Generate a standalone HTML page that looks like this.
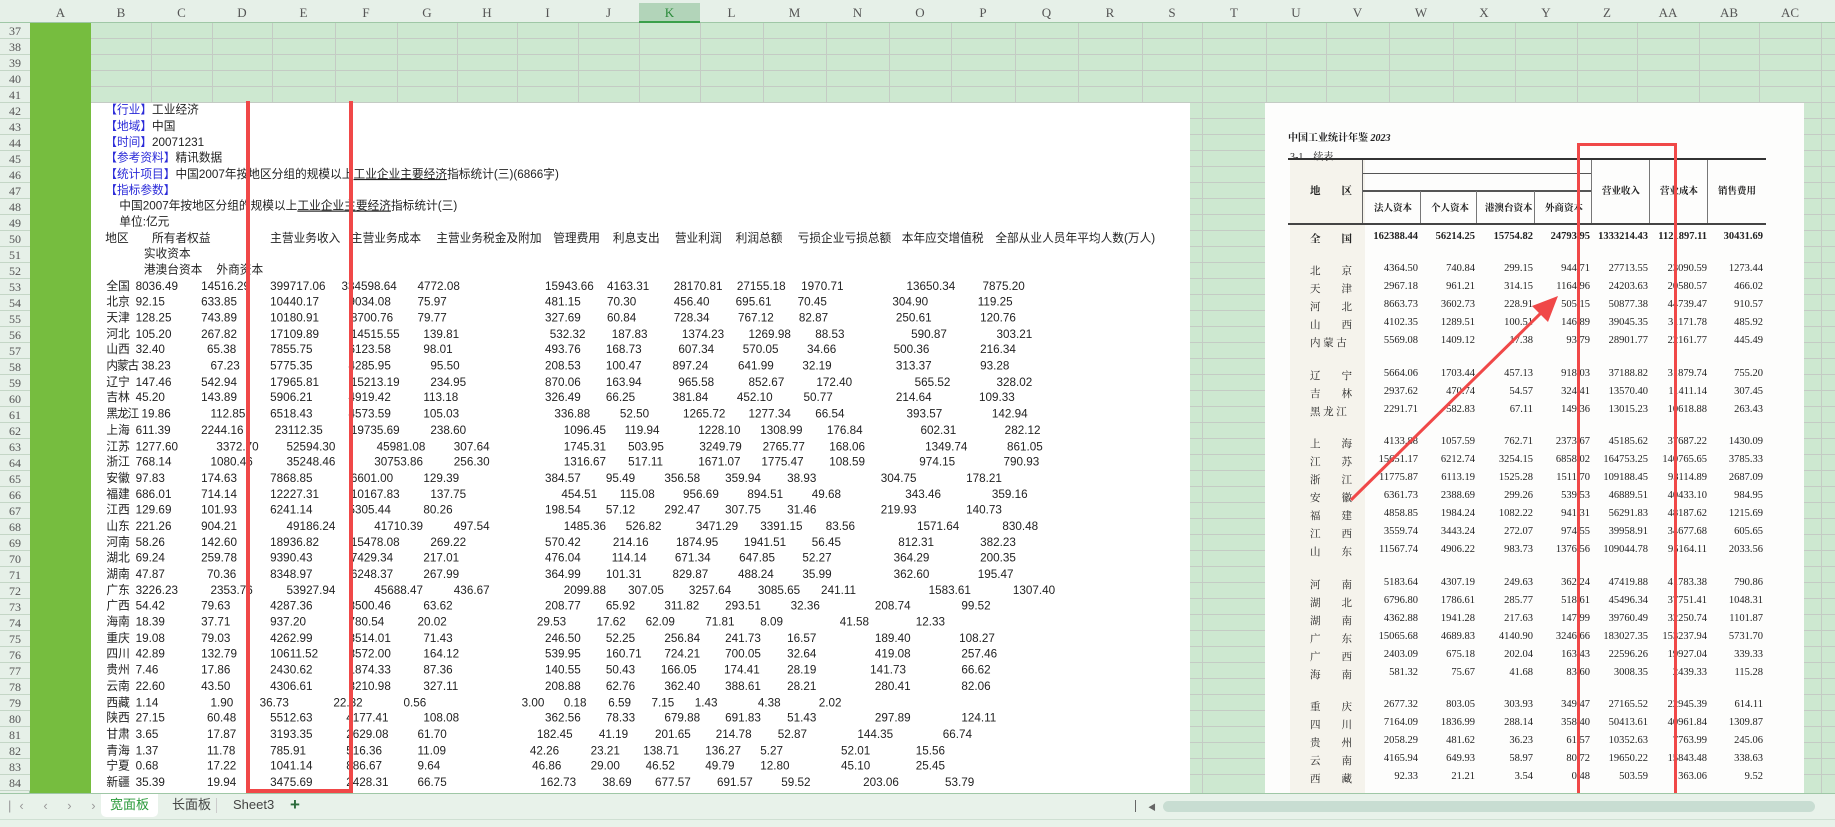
<!DOCTYPE html>
<html><head><meta charset="utf-8"><style>
*{margin:0;padding:0;box-sizing:border-box}
body{width:1835px;height:827px;overflow:hidden;background:#cde8d0;font-family:"Liberation Sans","Noto Sans CJK SC",sans-serif;position:relative}
.abs{position:absolute}
.ch{position:absolute;top:3px;height:20px;font:13px "Liberation Serif","Noto Serif CJK SC",serif;color:#555;text-align:center;line-height:20px}
.vl{position:absolute;top:23px;width:1px;height:770px;background:#c4cbc4}
.hl{position:absolute;left:30px;right:0;height:1px;background:#c4cbc4}
.rn{position:absolute;left:0;width:30px;height:16px;font:12px "Liberation Serif",serif;color:#555;text-align:center;line-height:16px;border-bottom:1px solid #c4d6c6;background:#e6f0e8}
#L{position:absolute;left:0;top:0;width:1100px;height:700px;transform:scale(1.1696);transform-origin:0 0;font-size:10px;color:#222}
#L .r{position:absolute;left:0;height:13.68px;line-height:13.68px;white-space:nowrap}
#L .r span{position:absolute;white-space:nowrap}
.bl{color:#2a2ad8}
#R{position:absolute;left:1265px;top:103px;width:539px;height:690px;background:#fdfdfc;font-family:"Liberation Serif","Noto Serif CJK SC",serif;color:#222}
#R .t{position:absolute;font-size:10.5px;white-space:nowrap}
#R .v{position:absolute;font-size:10.5px;text-align:right;width:60px;white-space:nowrap}
</style></head><body>
<div class="abs" style="left:0;top:0;width:1835px;height:23px;background:#e6f0e8;border-bottom:1px solid #9fc7a6"></div>
<div class="abs" style="left:639px;top:3px;width:61px;height:20px;background:#b2d4b9;border-bottom:2px solid #3aa04a"></div>
<div class="ch" style="left:30px;width:61px">A</div><div class="ch" style="left:91px;width:60px">B</div><div class="ch" style="left:151px;width:61px">C</div><div class="ch" style="left:212px;width:60px">D</div><div class="ch" style="left:272px;width:63px">E</div><div class="ch" style="left:335px;width:62px">F</div><div class="ch" style="left:397px;width:60px">G</div><div class="ch" style="left:457px;width:60px">H</div><div class="ch" style="left:517px;width:61px">I</div><div class="ch" style="left:578px;width:61px">J</div><div class="ch" style="left:639px;width:61px;color:#2a8a3a">K</div><div class="ch" style="left:700px;width:63px">L</div><div class="ch" style="left:763px;width:63px">M</div><div class="ch" style="left:826px;width:63px">N</div><div class="ch" style="left:889px;width:62px">O</div><div class="ch" style="left:951px;width:64px">P</div><div class="ch" style="left:1015px;width:63px">Q</div><div class="ch" style="left:1078px;width:64px">R</div><div class="ch" style="left:1142px;width:60px">S</div><div class="ch" style="left:1202px;width:64px">T</div><div class="ch" style="left:1266px;width:60px">U</div><div class="ch" style="left:1326px;width:63px">V</div><div class="ch" style="left:1389px;width:64px">W</div><div class="ch" style="left:1453px;width:62px">X</div><div class="ch" style="left:1515px;width:62px">Y</div><div class="ch" style="left:1577px;width:60px">Z</div><div class="ch" style="left:1637px;width:62px">AA</div><div class="ch" style="left:1699px;width:60px">AB</div><div class="ch" style="left:1759px;width:62px">AC</div>
<div class="vl" style="left:151px"></div><div class="vl" style="left:212px"></div><div class="vl" style="left:272px"></div><div class="vl" style="left:335px"></div><div class="vl" style="left:397px"></div><div class="vl" style="left:457px"></div><div class="vl" style="left:517px"></div><div class="vl" style="left:578px"></div><div class="vl" style="left:639px"></div><div class="vl" style="left:700px"></div><div class="vl" style="left:763px"></div><div class="vl" style="left:826px"></div><div class="vl" style="left:889px"></div><div class="vl" style="left:951px"></div><div class="vl" style="left:1015px"></div><div class="vl" style="left:1078px"></div><div class="vl" style="left:1142px"></div><div class="vl" style="left:1202px"></div><div class="vl" style="left:1266px"></div><div class="vl" style="left:1326px"></div><div class="vl" style="left:1389px"></div><div class="vl" style="left:1453px"></div><div class="vl" style="left:1515px"></div><div class="vl" style="left:1577px"></div><div class="vl" style="left:1637px"></div><div class="vl" style="left:1699px"></div><div class="vl" style="left:1759px"></div><div class="vl" style="left:1821px"></div>
<div class="hl" style="top:38px"></div><div class="hl" style="top:54px"></div><div class="hl" style="top:70px"></div><div class="hl" style="top:86px"></div><div class="hl" style="top:102px"></div>
<div class="hl" style="top:118px;left:1190px"></div><div class="hl" style="top:134px;left:1190px"></div><div class="hl" style="top:150px;left:1190px"></div><div class="hl" style="top:166px;left:1190px"></div><div class="hl" style="top:182px;left:1190px"></div><div class="hl" style="top:198px;left:1190px"></div><div class="hl" style="top:214px;left:1190px"></div><div class="hl" style="top:230px;left:1190px"></div><div class="hl" style="top:246px;left:1190px"></div><div class="hl" style="top:262px;left:1190px"></div><div class="hl" style="top:278px;left:1190px"></div><div class="hl" style="top:294px;left:1190px"></div><div class="hl" style="top:310px;left:1190px"></div><div class="hl" style="top:326px;left:1190px"></div><div class="hl" style="top:342px;left:1190px"></div><div class="hl" style="top:358px;left:1190px"></div><div class="hl" style="top:374px;left:1190px"></div><div class="hl" style="top:390px;left:1190px"></div><div class="hl" style="top:406px;left:1190px"></div><div class="hl" style="top:422px;left:1190px"></div><div class="hl" style="top:438px;left:1190px"></div><div class="hl" style="top:454px;left:1190px"></div><div class="hl" style="top:470px;left:1190px"></div><div class="hl" style="top:486px;left:1190px"></div><div class="hl" style="top:502px;left:1190px"></div><div class="hl" style="top:518px;left:1190px"></div><div class="hl" style="top:534px;left:1190px"></div><div class="hl" style="top:550px;left:1190px"></div><div class="hl" style="top:566px;left:1190px"></div><div class="hl" style="top:582px;left:1190px"></div><div class="hl" style="top:598px;left:1190px"></div><div class="hl" style="top:614px;left:1190px"></div><div class="hl" style="top:630px;left:1190px"></div><div class="hl" style="top:646px;left:1190px"></div><div class="hl" style="top:662px;left:1190px"></div><div class="hl" style="top:678px;left:1190px"></div><div class="hl" style="top:694px;left:1190px"></div><div class="hl" style="top:710px;left:1190px"></div><div class="hl" style="top:726px;left:1190px"></div><div class="hl" style="top:742px;left:1190px"></div><div class="hl" style="top:758px;left:1190px"></div><div class="hl" style="top:774px;left:1190px"></div>
<div class="abs" style="left:0;top:23px;width:30px;height:770px;background:#e6f0e8;border-right:1px solid #9fc7a6"></div>
<div class="rn" style="top:23px">37</div><div class="rn" style="top:39px">38</div><div class="rn" style="top:55px">39</div><div class="rn" style="top:71px">40</div><div class="rn" style="top:87px">41</div><div class="rn" style="top:103px">42</div><div class="rn" style="top:119px">43</div><div class="rn" style="top:135px">44</div><div class="rn" style="top:151px">45</div><div class="rn" style="top:167px">46</div><div class="rn" style="top:183px">47</div><div class="rn" style="top:199px">48</div><div class="rn" style="top:215px">49</div><div class="rn" style="top:231px">50</div><div class="rn" style="top:247px">51</div><div class="rn" style="top:263px">52</div><div class="rn" style="top:279px">53</div><div class="rn" style="top:295px">54</div><div class="rn" style="top:311px">55</div><div class="rn" style="top:327px">56</div><div class="rn" style="top:343px">57</div><div class="rn" style="top:359px">58</div><div class="rn" style="top:375px">59</div><div class="rn" style="top:391px">60</div><div class="rn" style="top:407px">61</div><div class="rn" style="top:423px">62</div><div class="rn" style="top:439px">63</div><div class="rn" style="top:455px">64</div><div class="rn" style="top:471px">65</div><div class="rn" style="top:487px">66</div><div class="rn" style="top:503px">67</div><div class="rn" style="top:519px">68</div><div class="rn" style="top:535px">69</div><div class="rn" style="top:551px">70</div><div class="rn" style="top:567px">71</div><div class="rn" style="top:583px">72</div><div class="rn" style="top:599px">73</div><div class="rn" style="top:615px">74</div><div class="rn" style="top:631px">75</div><div class="rn" style="top:647px">76</div><div class="rn" style="top:663px">77</div><div class="rn" style="top:679px">78</div><div class="rn" style="top:695px">79</div><div class="rn" style="top:711px">80</div><div class="rn" style="top:727px">81</div><div class="rn" style="top:743px">82</div><div class="rn" style="top:759px">83</div><div class="rn" style="top:775px">84</div>
<div class="abs" style="left:30px;top:23px;width:61px;height:770px;background:#76bd3f"></div>
<div class="abs" style="left:91px;top:103px;width:1099px;height:690px;background:#fff"></div>

<div id="L">
<div class="r" style="top:88px"><span style="left:90px"><b class="bl" style="font-weight:normal">【行业】</b>工业经济</span></div>
<div class="r" style="top:101.8px"><span style="left:90px"><b class="bl" style="font-weight:normal">【地域】</b>中国</span></div>
<div class="r" style="top:115.5px"><span style="left:90px"><b class="bl" style="font-weight:normal">【时间】</b>20071231</span></div>
<div class="r" style="top:129.2px"><span style="left:90px"><b class="bl" style="font-weight:normal">【参考资料】</b>精讯数据</span></div>
<div class="r" style="top:142.8px"><span style="left:90px"><b class="bl" style="font-weight:normal">【统计项目】</b>中国2007年按地区分组的规模以上<u>工业企业主要经济</u>指标统计(三)(6866字)</span></div>
<div class="r" style="top:156.5px"><span style="left:90px" class="bl">【指标参数】</span></div>
<div class="r" style="top:170.2px"><span style="left:102px">中国2007年按地区分组的规模以上<u>工业企业主要经济</u>指标统计(三)</span></div>
<div class="r" style="top:183.9px"><span style="left:102px">单位:亿元</span></div>
<div class="r" style="top:197.6px"><span style="left:90px">地区</span><span style="left:130px">所有者权益</span><span style="left:231px">主营业务收入</span><span style="left:300px">主营业务成本</span><span style="left:373px">主营业务税金及附加</span><span style="left:473px">管理费用</span><span style="left:524px">利息支出</span><span style="left:577px">营业利润</span><span style="left:629px">利润总额</span><span style="left:682px">亏损企业亏损总额</span><span style="left:771px">本年应交增值税</span><span style="left:851px">全部从业人员年平均人数(万人)</span></div>
<div class="r" style="top:211.3px"><span style="left:123px">实收资本</span></div>
<div class="r" style="top:225px"><span style="left:123px">港澳台资本</span><span style="left:185px">外商资本</span></div>
<div class="r" style="top:238.6px"><span style="left:91px">全国</span><span style="left:116px">8036.49</span><span style="left:172px">14516.29</span><span style="left:231px">399717.06</span><span style="left:292px">334598.64</span><span style="left:357px">4772.08</span><span style="left:466px">15943.66</span><span style="left:519px">4163.31</span><span style="left:576px">28170.81</span><span style="left:630px">27155.18</span><span style="left:685px">1970.71</span><span style="left:775px">13650.34</span><span style="left:840px">7875.20</span></div>
<div class="r" style="top:252.3px"><span style="left:91px">北京</span><span style="left:116px">92.15</span><span style="left:172px">633.85</span><span style="left:231px">10440.17</span><span style="left:298px">9034.08</span><span style="left:357px">75.97</span><span style="left:466px">481.15</span><span style="left:519px">70.30</span><span style="left:576px">456.40</span><span style="left:629px">695.61</span><span style="left:682px">70.45</span><span style="left:763px">304.90</span><span style="left:836px">119.25</span></div>
<div class="r" style="top:266px"><span style="left:91px">天津</span><span style="left:116px">128.25</span><span style="left:172px">743.89</span><span style="left:231px">10180.91</span><span style="left:300px">8700.76</span><span style="left:357px">79.77</span><span style="left:466px">327.69</span><span style="left:519px">60.84</span><span style="left:576px">728.34</span><span style="left:631px">767.12</span><span style="left:683px">82.87</span><span style="left:766px">250.61</span><span style="left:838px">120.76</span></div>
<div class="r" style="top:279.7px"><span style="left:91px">河北</span><span style="left:116px">105.20</span><span style="left:172px">267.82</span><span style="left:231px">17109.89</span><span style="left:300px">14515.55</span><span style="left:362px">139.81</span><span style="left:470px">532.32</span><span style="left:523px">187.83</span><span style="left:583px">1374.23</span><span style="left:640px">1269.98</span><span style="left:697px">88.53</span><span style="left:779px">590.87</span><span style="left:852px">303.21</span></div>
<div class="r" style="top:293.4px"><span style="left:91px">山西</span><span style="left:116px">32.40</span><span style="left:177px">65.38</span><span style="left:231px">7855.75</span><span style="left:298px">6123.58</span><span style="left:362px">98.01</span><span style="left:466px">493.76</span><span style="left:518px">168.73</span><span style="left:580px">607.34</span><span style="left:635px">570.05</span><span style="left:690px">34.66</span><span style="left:764px">500.36</span><span style="left:838px">216.34</span></div>
<div class="r" style="top:307.1px"><span style="left:91px;letter-spacing:-1px">内蒙古</span><span style="left:121px">38.23</span><span style="left:180px">67.23</span><span style="left:231px">5775.35</span><span style="left:298px">4285.95</span><span style="left:368px">95.50</span><span style="left:466px">208.53</span><span style="left:518px">100.47</span><span style="left:575px">897.24</span><span style="left:631px">641.99</span><span style="left:686px">32.19</span><span style="left:766px">313.37</span><span style="left:838px">93.28</span></div>
<div class="r" style="top:320.8px"><span style="left:91px">辽宁</span><span style="left:116px">147.46</span><span style="left:172px">542.94</span><span style="left:231px">17965.81</span><span style="left:300px">15213.19</span><span style="left:368px">234.95</span><span style="left:466px">870.06</span><span style="left:518px">163.94</span><span style="left:580px">965.58</span><span style="left:640px">852.67</span><span style="left:698px">172.40</span><span style="left:782px">565.52</span><span style="left:852px">328.02</span></div>
<div class="r" style="top:334.4px"><span style="left:91px">吉林</span><span style="left:116px">45.20</span><span style="left:172px">143.89</span><span style="left:231px">5906.21</span><span style="left:298px">4919.42</span><span style="left:362px">113.18</span><span style="left:466px">326.49</span><span style="left:518px">66.25</span><span style="left:575px">381.84</span><span style="left:630px">452.10</span><span style="left:687px">50.77</span><span style="left:766px">214.64</span><span style="left:837px">109.33</span></div>
<div class="r" style="top:348.1px"><span style="left:91px;letter-spacing:-1px">黑龙江</span><span style="left:121px">19.86</span><span style="left:180px">112.85</span><span style="left:231px">6518.43</span><span style="left:298px">4573.59</span><span style="left:362px">105.03</span><span style="left:474px">336.88</span><span style="left:530px">52.50</span><span style="left:584px">1265.72</span><span style="left:640px">1277.34</span><span style="left:697px">66.54</span><span style="left:775px">393.57</span><span style="left:848px">142.94</span></div>
<div class="r" style="top:361.8px"><span style="left:91px">上海</span><span style="left:116px">611.39</span><span style="left:172px">2244.16</span><span style="left:235px">23112.35</span><span style="left:300px">19735.69</span><span style="left:368px">238.60</span><span style="left:482px">1096.45</span><span style="left:534px">119.94</span><span style="left:597px">1228.10</span><span style="left:650px">1308.99</span><span style="left:707px">176.84</span><span style="left:787px">602.31</span><span style="left:859px">282.12</span></div>
<div class="r" style="top:375.5px"><span style="left:91px">江苏</span><span style="left:116px">1277.60</span><span style="left:185px">3372.70</span><span style="left:245px">52594.30</span><span style="left:322px">45981.08</span><span style="left:388px">307.64</span><span style="left:482px">1745.31</span><span style="left:537px">503.95</span><span style="left:598px">3249.79</span><span style="left:652px">2765.77</span><span style="left:709px">168.06</span><span style="left:791px">1349.74</span><span style="left:861px">861.05</span></div>
<div class="r" style="top:389.2px"><span style="left:91px">浙江</span><span style="left:116px">768.14</span><span style="left:180px">1080.46</span><span style="left:245px">35248.46</span><span style="left:320px">30753.86</span><span style="left:388px">256.30</span><span style="left:482px">1316.67</span><span style="left:537px">517.11</span><span style="left:597px">1671.07</span><span style="left:651px">1775.47</span><span style="left:709px">108.59</span><span style="left:786px">974.15</span><span style="left:858px">790.93</span></div>
<div class="r" style="top:402.9px"><span style="left:91px">安徽</span><span style="left:116px">97.83</span><span style="left:172px">174.63</span><span style="left:231px">7868.85</span><span style="left:300px">6601.00</span><span style="left:362px">129.39</span><span style="left:466px">384.57</span><span style="left:518px">95.49</span><span style="left:568px">356.58</span><span style="left:620px">359.94</span><span style="left:673px">38.93</span><span style="left:753px">304.75</span><span style="left:826px">178.21</span></div>
<div class="r" style="top:416.6px"><span style="left:91px">福建</span><span style="left:116px">686.01</span><span style="left:172px">714.14</span><span style="left:231px">12227.31</span><span style="left:300px">10167.83</span><span style="left:368px">137.75</span><span style="left:480px">454.51</span><span style="left:530px">115.08</span><span style="left:584px">956.69</span><span style="left:639px">894.51</span><span style="left:694px">49.68</span><span style="left:774px">343.46</span><span style="left:848px">359.16</span></div>
<div class="r" style="top:430.3px"><span style="left:91px">江西</span><span style="left:116px">129.69</span><span style="left:172px">101.93</span><span style="left:231px">6241.14</span><span style="left:298px">5305.44</span><span style="left:362px">80.26</span><span style="left:466px">198.54</span><span style="left:518px">57.12</span><span style="left:568px">292.47</span><span style="left:620px">307.75</span><span style="left:673px">31.46</span><span style="left:753px">219.93</span><span style="left:826px">140.73</span></div>
<div class="r" style="top:443.9px"><span style="left:91px">山东</span><span style="left:116px">221.26</span><span style="left:172px">904.21</span><span style="left:245px">49186.24</span><span style="left:320px">41710.39</span><span style="left:388px">497.54</span><span style="left:482px">1485.36</span><span style="left:535px">526.82</span><span style="left:595px">3471.29</span><span style="left:650px">3391.15</span><span style="left:706px">83.56</span><span style="left:784px">1571.64</span><span style="left:857px">830.48</span></div>
<div class="r" style="top:457.6px"><span style="left:91px">河南</span><span style="left:116px">58.26</span><span style="left:172px">142.60</span><span style="left:231px">18936.82</span><span style="left:300px">15478.08</span><span style="left:368px">269.22</span><span style="left:466px">570.42</span><span style="left:524px">214.16</span><span style="left:578px">1874.95</span><span style="left:636px">1941.51</span><span style="left:694px">56.45</span><span style="left:768px">812.31</span><span style="left:838px">382.23</span></div>
<div class="r" style="top:471.3px"><span style="left:91px">湖北</span><span style="left:116px">69.24</span><span style="left:172px">259.78</span><span style="left:231px">9390.43</span><span style="left:300px">7429.34</span><span style="left:362px">217.01</span><span style="left:466px">476.04</span><span style="left:523px">114.14</span><span style="left:577px">671.34</span><span style="left:632px">647.85</span><span style="left:686px">52.27</span><span style="left:764px">364.29</span><span style="left:838px">200.35</span></div>
<div class="r" style="top:485px"><span style="left:91px">湖南</span><span style="left:116px">47.87</span><span style="left:177px">70.36</span><span style="left:231px">8348.97</span><span style="left:300px">6248.37</span><span style="left:362px">267.99</span><span style="left:466px">364.99</span><span style="left:518px">101.31</span><span style="left:575px">829.87</span><span style="left:631px">488.24</span><span style="left:686px">35.99</span><span style="left:764px">362.60</span><span style="left:836px">195.47</span></div>
<div class="r" style="top:498.7px"><span style="left:91px">广东</span><span style="left:116px">3226.23</span><span style="left:180px">2353.76</span><span style="left:245px">53927.94</span><span style="left:320px">45688.47</span><span style="left:388px">436.67</span><span style="left:482px">2099.88</span><span style="left:537px">307.05</span><span style="left:589px">3257.64</span><span style="left:648px">3085.65</span><span style="left:702px">241.11</span><span style="left:794px">1583.61</span><span style="left:866px">1307.40</span></div>
<div class="r" style="top:512.4px"><span style="left:91px">广西</span><span style="left:116px">54.42</span><span style="left:172px">79.63</span><span style="left:231px">4287.36</span><span style="left:298px">3500.46</span><span style="left:362px">63.62</span><span style="left:466px">208.77</span><span style="left:518px">65.92</span><span style="left:568px">311.82</span><span style="left:620px">293.51</span><span style="left:676px">32.36</span><span style="left:748px">208.74</span><span style="left:822px">99.52</span></div>
<div class="r" style="top:526.1px"><span style="left:91px">海南</span><span style="left:116px">18.39</span><span style="left:172px">37.71</span><span style="left:231px">937.20</span><span style="left:298px">780.54</span><span style="left:357px">20.02</span><span style="left:459px">29.53</span><span style="left:510px">17.62</span><span style="left:552px">62.09</span><span style="left:603px">71.81</span><span style="left:650px">8.09</span><span style="left:718px">41.58</span><span style="left:783px">12.33</span></div>
<div class="r" style="top:539.8px"><span style="left:91px">重庆</span><span style="left:116px">19.08</span><span style="left:172px">79.03</span><span style="left:231px">4262.99</span><span style="left:298px">3514.01</span><span style="left:362px">71.43</span><span style="left:466px">246.50</span><span style="left:518px">52.25</span><span style="left:568px">256.84</span><span style="left:620px">241.73</span><span style="left:673px">16.57</span><span style="left:748px">189.40</span><span style="left:820px">108.27</span></div>
<div class="r" style="top:553.4px"><span style="left:91px">四川</span><span style="left:116px">42.89</span><span style="left:172px">132.79</span><span style="left:231px">10611.52</span><span style="left:298px">8572.00</span><span style="left:362px">164.12</span><span style="left:466px">539.95</span><span style="left:518px">160.71</span><span style="left:568px">724.21</span><span style="left:620px">700.05</span><span style="left:673px">32.64</span><span style="left:748px">419.08</span><span style="left:822px">257.46</span></div>
<div class="r" style="top:567.1px"><span style="left:91px">贵州</span><span style="left:116px">7.46</span><span style="left:172px">17.86</span><span style="left:231px">2430.62</span><span style="left:298px">1874.33</span><span style="left:362px">87.36</span><span style="left:466px">140.55</span><span style="left:518px">50.43</span><span style="left:565px">166.05</span><span style="left:619px">174.41</span><span style="left:673px">28.19</span><span style="left:744px">141.73</span><span style="left:822px">66.62</span></div>
<div class="r" style="top:580.8px"><span style="left:91px">云南</span><span style="left:116px">22.60</span><span style="left:172px">43.50</span><span style="left:231px">4306.61</span><span style="left:298px">3210.98</span><span style="left:362px">327.11</span><span style="left:466px">208.88</span><span style="left:518px">62.76</span><span style="left:568px">362.40</span><span style="left:620px">388.61</span><span style="left:673px">28.21</span><span style="left:748px">280.41</span><span style="left:822px">82.06</span></div>
<div class="r" style="top:594.5px"><span style="left:91px">西藏</span><span style="left:116px">1.14</span><span style="left:180px">1.90</span><span style="left:222px">36.73</span><span style="left:285px">22.32</span><span style="left:345px">0.56</span><span style="left:446px">3.00</span><span style="left:482px">0.18</span><span style="left:520px">6.59</span><span style="left:557px">7.15</span><span style="left:594px">1.43</span><span style="left:648px">4.38</span><span style="left:700px">2.02</span></div>
<div class="r" style="top:608.2px"><span style="left:91px">陕西</span><span style="left:116px">27.15</span><span style="left:177px">60.48</span><span style="left:231px">5512.63</span><span style="left:296px">4177.41</span><span style="left:362px">108.08</span><span style="left:466px">362.56</span><span style="left:518px">78.33</span><span style="left:568px">679.88</span><span style="left:620px">691.83</span><span style="left:673px">51.43</span><span style="left:748px">297.89</span><span style="left:822px">124.11</span></div>
<div class="r" style="top:621.9px"><span style="left:91px">甘肃</span><span style="left:116px">3.65</span><span style="left:177px">17.87</span><span style="left:231px">3193.35</span><span style="left:296px">2629.08</span><span style="left:357px">61.70</span><span style="left:459px">182.45</span><span style="left:512px">41.19</span><span style="left:560px">201.65</span><span style="left:612px">214.78</span><span style="left:665px">52.87</span><span style="left:733px">144.35</span><span style="left:806px">66.74</span></div>
<div class="r" style="top:635.6px"><span style="left:91px">青海</span><span style="left:116px">1.37</span><span style="left:177px">11.78</span><span style="left:231px">785.91</span><span style="left:296px">516.36</span><span style="left:357px">11.09</span><span style="left:453px">42.26</span><span style="left:505px">23.21</span><span style="left:550px">138.71</span><span style="left:603px">136.27</span><span style="left:650px">5.27</span><span style="left:719px">52.01</span><span style="left:783px">15.56</span></div>
<div class="r" style="top:649.3px"><span style="left:91px">宁夏</span><span style="left:116px">0.68</span><span style="left:177px">17.22</span><span style="left:231px">1041.14</span><span style="left:296px">886.67</span><span style="left:357px">9.64</span><span style="left:455px">46.86</span><span style="left:505px">29.00</span><span style="left:552px">46.52</span><span style="left:603px">49.79</span><span style="left:650px">12.80</span><span style="left:719px">45.10</span><span style="left:783px">25.45</span></div>
<div class="r" style="top:663px"><span style="left:91px">新疆</span><span style="left:116px">35.39</span><span style="left:177px">19.94</span><span style="left:231px">3475.69</span><span style="left:296px">2428.31</span><span style="left:357px">66.75</span><span style="left:462px">162.73</span><span style="left:515px">38.69</span><span style="left:560px">677.57</span><span style="left:613px">691.57</span><span style="left:668px">59.52</span><span style="left:738px">203.06</span><span style="left:808px">53.79</span></div>
<div class="r" style="top:675px;height:4px;overflow:hidden"><span style="left:102px;top:-6px">摘编自<b style="font-weight:normal;color:#e83030">《中国工业经济统计年鉴2008》</b></span></div>
</div>

<div id="R">
<div class="abs" style="left:25px;top:55px;width:75px;height:635px;background:#f5f3ec"></div>
<div class="t" style="left:23px;top:26px;font-weight:bold;font-size:10px">中国工业统计年鉴 <i>2023</i></div>
<div class="t" style="left:25px;top:45px;font-size:10px">3-1　续表</div>
<div class="abs" style="left:23px;top:55px;width:478px;height:2px;background:#333"></div>
<div class="abs" style="left:97px;top:70px;width:229px;height:1px;background:#555"></div>
<div class="abs" style="left:97px;top:87px;width:229px;height:2px;background:#555"></div>
<div class="abs" style="left:23px;top:120px;width:478px;height:2px;background:#444"></div>
<div class="abs" style="left:97px;top:57px;width:1px;height:63px;background:#666"></div>
<div class="abs" style="left:155px;top:88px;width:1px;height:32px;background:#777"></div>
<div class="abs" style="left:211px;top:88px;width:1px;height:32px;background:#777"></div>
<div class="abs" style="left:269px;top:88px;width:1px;height:32px;background:#777"></div>
<div class="abs" style="left:326px;top:57px;width:1px;height:63px;background:#777"></div>
<div class="abs" style="left:384px;top:57px;width:1px;height:63px;background:#777"></div>
<div class="abs" style="left:442px;top:57px;width:1px;height:63px;background:#777"></div>
<div class="t" style="left:45px;top:80px;font-weight:bold">地　　区</div>
<div class="t" style="left:109px;top:97px;font-weight:bold;font-size:9.5px">法人资本</div>
<div class="t" style="left:166px;top:97px;font-weight:bold;font-size:9.5px">个人资本</div>
<div class="t" style="left:220px;top:97px;font-weight:bold;font-size:9.5px">港澳台资本</div>
<div class="t" style="left:280px;top:97px;font-weight:bold;font-size:9.5px">外商资本</div>
<div class="t" style="left:337px;top:80px;font-weight:bold;font-size:9.5px">营业收入</div>
<div class="t" style="left:395px;top:80px;font-weight:bold;font-size:9.5px">营业成本</div>
<div class="t" style="left:453px;top:80px;font-weight:bold;font-size:9.5px">销售费用</div>
<div style="position:absolute;left:0;top:128px;font-weight:bold">
<div class="t" style="left:45px">全　　国</div><div class="v" style="left:93px">162388.44</div><div class="v" style="left:150px">56214.25</div><div class="v" style="left:208px">15754.82</div><div class="v" style="left:265px">24793.95</div><div class="v" style="left:323px">1333214.43</div><div class="v" style="left:382px">1121897.11</div><div class="v" style="left:438px">30431.69</div>
</div>
<div style="position:absolute;left:0;top:160px"><div class="t" style="left:45px">北　　京</div><div class="v" style="left:93px">4364.50</div><div class="v" style="left:150px">740.84</div><div class="v" style="left:208px">299.15</div><div class="v" style="left:265px">944.71</div><div class="v" style="left:323px">27713.55</div><div class="v" style="left:382px">23090.59</div><div class="v" style="left:438px">1273.44</div></div>
<div style="position:absolute;left:0;top:178px"><div class="t" style="left:45px">天　　津</div><div class="v" style="left:93px">2967.18</div><div class="v" style="left:150px">961.21</div><div class="v" style="left:208px">314.15</div><div class="v" style="left:265px">1164.96</div><div class="v" style="left:323px">24203.63</div><div class="v" style="left:382px">20580.57</div><div class="v" style="left:438px">466.02</div></div>
<div style="position:absolute;left:0;top:196px"><div class="t" style="left:45px">河　　北</div><div class="v" style="left:93px">8663.73</div><div class="v" style="left:150px">3602.73</div><div class="v" style="left:208px">228.91</div><div class="v" style="left:265px">505.15</div><div class="v" style="left:323px">50877.38</div><div class="v" style="left:382px">44739.47</div><div class="v" style="left:438px">910.57</div></div>
<div style="position:absolute;left:0;top:214px"><div class="t" style="left:45px">山　　西</div><div class="v" style="left:93px">4102.35</div><div class="v" style="left:150px">1289.51</div><div class="v" style="left:208px">100.51</div><div class="v" style="left:265px">146.89</div><div class="v" style="left:323px">39045.35</div><div class="v" style="left:382px">31171.78</div><div class="v" style="left:438px">485.92</div></div>
<div style="position:absolute;left:0;top:232px"><div class="t" style="left:45px">内 蒙 古</div><div class="v" style="left:93px">5569.08</div><div class="v" style="left:150px">1409.12</div><div class="v" style="left:208px">17.38</div><div class="v" style="left:265px">93.79</div><div class="v" style="left:323px">28901.77</div><div class="v" style="left:382px">22161.77</div><div class="v" style="left:438px">445.49</div></div>
<div style="position:absolute;left:0;top:265px"><div class="t" style="left:45px">辽　　宁</div><div class="v" style="left:93px">5664.06</div><div class="v" style="left:150px">1703.44</div><div class="v" style="left:208px">457.13</div><div class="v" style="left:265px">918.03</div><div class="v" style="left:323px">37188.82</div><div class="v" style="left:382px">31879.74</div><div class="v" style="left:438px">755.20</div></div>
<div style="position:absolute;left:0;top:283px"><div class="t" style="left:45px">吉　　林</div><div class="v" style="left:93px">2937.62</div><div class="v" style="left:150px">470.74</div><div class="v" style="left:208px">54.57</div><div class="v" style="left:265px">324.41</div><div class="v" style="left:323px">13570.40</div><div class="v" style="left:382px">11411.14</div><div class="v" style="left:438px">307.45</div></div>
<div style="position:absolute;left:0;top:301px"><div class="t" style="left:45px">黑 龙 江</div><div class="v" style="left:93px">2291.71</div><div class="v" style="left:150px">582.83</div><div class="v" style="left:208px">67.11</div><div class="v" style="left:265px">149.36</div><div class="v" style="left:323px">13015.23</div><div class="v" style="left:382px">10618.88</div><div class="v" style="left:438px">263.43</div></div>
<div style="position:absolute;left:0;top:333px"><div class="t" style="left:45px">上　　海</div><div class="v" style="left:93px">4133.88</div><div class="v" style="left:150px">1057.59</div><div class="v" style="left:208px">762.71</div><div class="v" style="left:265px">2373.67</div><div class="v" style="left:323px">45185.62</div><div class="v" style="left:382px">37687.22</div><div class="v" style="left:438px">1430.09</div></div>
<div style="position:absolute;left:0;top:351px"><div class="t" style="left:45px">江　　苏</div><div class="v" style="left:93px">15651.17</div><div class="v" style="left:150px">6212.74</div><div class="v" style="left:208px">3254.15</div><div class="v" style="left:265px">6858.02</div><div class="v" style="left:323px">164753.25</div><div class="v" style="left:382px">140765.65</div><div class="v" style="left:438px">3785.33</div></div>
<div style="position:absolute;left:0;top:369px"><div class="t" style="left:45px">浙　　江</div><div class="v" style="left:93px">11775.87</div><div class="v" style="left:150px">6113.19</div><div class="v" style="left:208px">1525.28</div><div class="v" style="left:265px">1511.70</div><div class="v" style="left:323px">109188.45</div><div class="v" style="left:382px">93114.89</div><div class="v" style="left:438px">2687.09</div></div>
<div style="position:absolute;left:0;top:387px"><div class="t" style="left:45px">安　　徽</div><div class="v" style="left:93px">6361.73</div><div class="v" style="left:150px">2388.69</div><div class="v" style="left:208px">299.26</div><div class="v" style="left:265px">539.53</div><div class="v" style="left:323px">46889.51</div><div class="v" style="left:382px">40433.10</div><div class="v" style="left:438px">984.95</div></div>
<div style="position:absolute;left:0;top:405px"><div class="t" style="left:45px">福　　建</div><div class="v" style="left:93px">4858.85</div><div class="v" style="left:150px">1984.24</div><div class="v" style="left:208px">1082.22</div><div class="v" style="left:265px">941.31</div><div class="v" style="left:323px">56291.83</div><div class="v" style="left:382px">48187.62</div><div class="v" style="left:438px">1215.69</div></div>
<div style="position:absolute;left:0;top:423px"><div class="t" style="left:45px">江　　西</div><div class="v" style="left:93px">3559.74</div><div class="v" style="left:150px">3443.24</div><div class="v" style="left:208px">272.07</div><div class="v" style="left:265px">974.55</div><div class="v" style="left:323px">39958.91</div><div class="v" style="left:382px">34677.68</div><div class="v" style="left:438px">605.65</div></div>
<div style="position:absolute;left:0;top:441px"><div class="t" style="left:45px">山　　东</div><div class="v" style="left:93px">11567.74</div><div class="v" style="left:150px">4906.22</div><div class="v" style="left:208px">983.73</div><div class="v" style="left:265px">1376.56</div><div class="v" style="left:323px">109044.78</div><div class="v" style="left:382px">95164.11</div><div class="v" style="left:438px">2033.56</div></div>
<div style="position:absolute;left:0;top:474px"><div class="t" style="left:45px">河　　南</div><div class="v" style="left:93px">5183.64</div><div class="v" style="left:150px">4307.19</div><div class="v" style="left:208px">249.63</div><div class="v" style="left:265px">362.24</div><div class="v" style="left:323px">47419.88</div><div class="v" style="left:382px">41783.38</div><div class="v" style="left:438px">790.86</div></div>
<div style="position:absolute;left:0;top:492px"><div class="t" style="left:45px">湖　　北</div><div class="v" style="left:93px">6796.80</div><div class="v" style="left:150px">1786.61</div><div class="v" style="left:208px">285.77</div><div class="v" style="left:265px">518.61</div><div class="v" style="left:323px">45496.34</div><div class="v" style="left:382px">37751.41</div><div class="v" style="left:438px">1048.31</div></div>
<div style="position:absolute;left:0;top:510px"><div class="t" style="left:45px">湖　　南</div><div class="v" style="left:93px">4362.88</div><div class="v" style="left:150px">1941.28</div><div class="v" style="left:208px">217.63</div><div class="v" style="left:265px">147.99</div><div class="v" style="left:323px">39760.49</div><div class="v" style="left:382px">32250.74</div><div class="v" style="left:438px">1101.87</div></div>
<div style="position:absolute;left:0;top:528px"><div class="t" style="left:45px">广　　东</div><div class="v" style="left:93px">15065.68</div><div class="v" style="left:150px">4689.83</div><div class="v" style="left:208px">4140.90</div><div class="v" style="left:265px">3246.66</div><div class="v" style="left:323px">183027.35</div><div class="v" style="left:382px">153237.94</div><div class="v" style="left:438px">5731.70</div></div>
<div style="position:absolute;left:0;top:546px"><div class="t" style="left:45px">广　　西</div><div class="v" style="left:93px">2403.09</div><div class="v" style="left:150px">675.18</div><div class="v" style="left:208px">202.04</div><div class="v" style="left:265px">163.43</div><div class="v" style="left:323px">22596.26</div><div class="v" style="left:382px">19927.04</div><div class="v" style="left:438px">339.33</div></div>
<div style="position:absolute;left:0;top:564px"><div class="t" style="left:45px">海　　南</div><div class="v" style="left:93px">581.32</div><div class="v" style="left:150px">75.67</div><div class="v" style="left:208px">41.68</div><div class="v" style="left:265px">83.60</div><div class="v" style="left:323px">3008.35</div><div class="v" style="left:382px">2439.33</div><div class="v" style="left:438px">115.28</div></div>
<div style="position:absolute;left:0;top:596px"><div class="t" style="left:45px">重　　庆</div><div class="v" style="left:93px">2677.32</div><div class="v" style="left:150px">803.05</div><div class="v" style="left:208px">303.93</div><div class="v" style="left:265px">349.47</div><div class="v" style="left:323px">27165.52</div><div class="v" style="left:382px">22945.39</div><div class="v" style="left:438px">614.11</div></div>
<div style="position:absolute;left:0;top:614px"><div class="t" style="left:45px">四　　川</div><div class="v" style="left:93px">7164.09</div><div class="v" style="left:150px">1836.99</div><div class="v" style="left:208px">288.14</div><div class="v" style="left:265px">358.40</div><div class="v" style="left:323px">50413.61</div><div class="v" style="left:382px">40961.84</div><div class="v" style="left:438px">1309.87</div></div>
<div style="position:absolute;left:0;top:632px"><div class="t" style="left:45px">贵　　州</div><div class="v" style="left:93px">2058.29</div><div class="v" style="left:150px">481.62</div><div class="v" style="left:208px">36.23</div><div class="v" style="left:265px">61.57</div><div class="v" style="left:323px">10352.63</div><div class="v" style="left:382px">7763.99</div><div class="v" style="left:438px">245.06</div></div>
<div style="position:absolute;left:0;top:650px"><div class="t" style="left:45px">云　　南</div><div class="v" style="left:93px">4165.94</div><div class="v" style="left:150px">649.93</div><div class="v" style="left:208px">58.97</div><div class="v" style="left:265px">80.72</div><div class="v" style="left:323px">19650.22</div><div class="v" style="left:382px">15843.48</div><div class="v" style="left:438px">338.63</div></div>
<div style="position:absolute;left:0;top:668px"><div class="t" style="left:45px">西　　藏</div><div class="v" style="left:93px">92.33</div><div class="v" style="left:150px">21.21</div><div class="v" style="left:208px">3.54</div><div class="v" style="left:265px">0.48</div><div class="v" style="left:323px">503.59</div><div class="v" style="left:382px">363.06</div><div class="v" style="left:438px">9.52</div></div>
</div>

<div class="abs" style="left:246px;top:101px;width:4px;height:692px;background:#f04848"></div>
<div class="abs" style="left:349px;top:101px;width:4px;height:692px;background:#f04848"></div>
<div class="abs" style="left:246px;top:789px;width:107px;height:4px;background:#f04848"></div>
<div class="abs" style="left:1577px;top:143px;width:100px;height:650px;border:3px solid #f04848;border-bottom:none"></div>
<svg class="abs" style="left:0;top:0" width="1835" height="827"><line x1="1351" y1="500" x2="1543" y2="311" stroke="#f04848" stroke-width="3"/><polygon points="1558,296 1532,306 1548,322" fill="#f04848"/></svg>

<div class="abs" style="left:0;top:793px;width:1835px;height:26px;background:#e8f2ea;border-top:1px solid #9fc7a6"></div>
<div class="abs" style="left:8px;top:798px;font-size:13px;color:#999;letter-spacing:8px">|‹ ‹ › ›|</div>
<div class="abs" style="left:101px;top:794px;width:57px;height:23px;background:#fff;border-radius:0 0 5px 5px;color:#2a9a3a;font-size:13px;text-align:center;line-height:22px">宽面板</div>
<div class="abs" style="left:172px;top:794px;font-size:13px;color:#444;line-height:22px">长面板</div>
<div class="abs" style="left:216px;top:798px;width:1px;height:15px;background:#ccc"></div>
<div class="abs" style="left:233px;top:794px;font-size:13px;color:#444;line-height:22px">Sheet3</div>
<div class="abs" style="left:290px;top:793px;font-size:17px;color:#2a6a3a;line-height:24px;font-weight:bold">+</div>
<div class="abs" style="left:1135px;top:800px;width:1px;height:12px;background:#666"></div>
<div class="abs" style="left:1148px;top:802px;font-size:8px;color:#666">◀</div>
<div class="abs" style="left:1163px;top:801px;width:652px;height:11px;background:#c8ddd2;border-radius:6px"></div>
<div class="abs" style="left:0;top:819px;width:1835px;height:8px;background:#e8f2ea;border-top:1px solid #cfe0d3"></div>
</body></html>
